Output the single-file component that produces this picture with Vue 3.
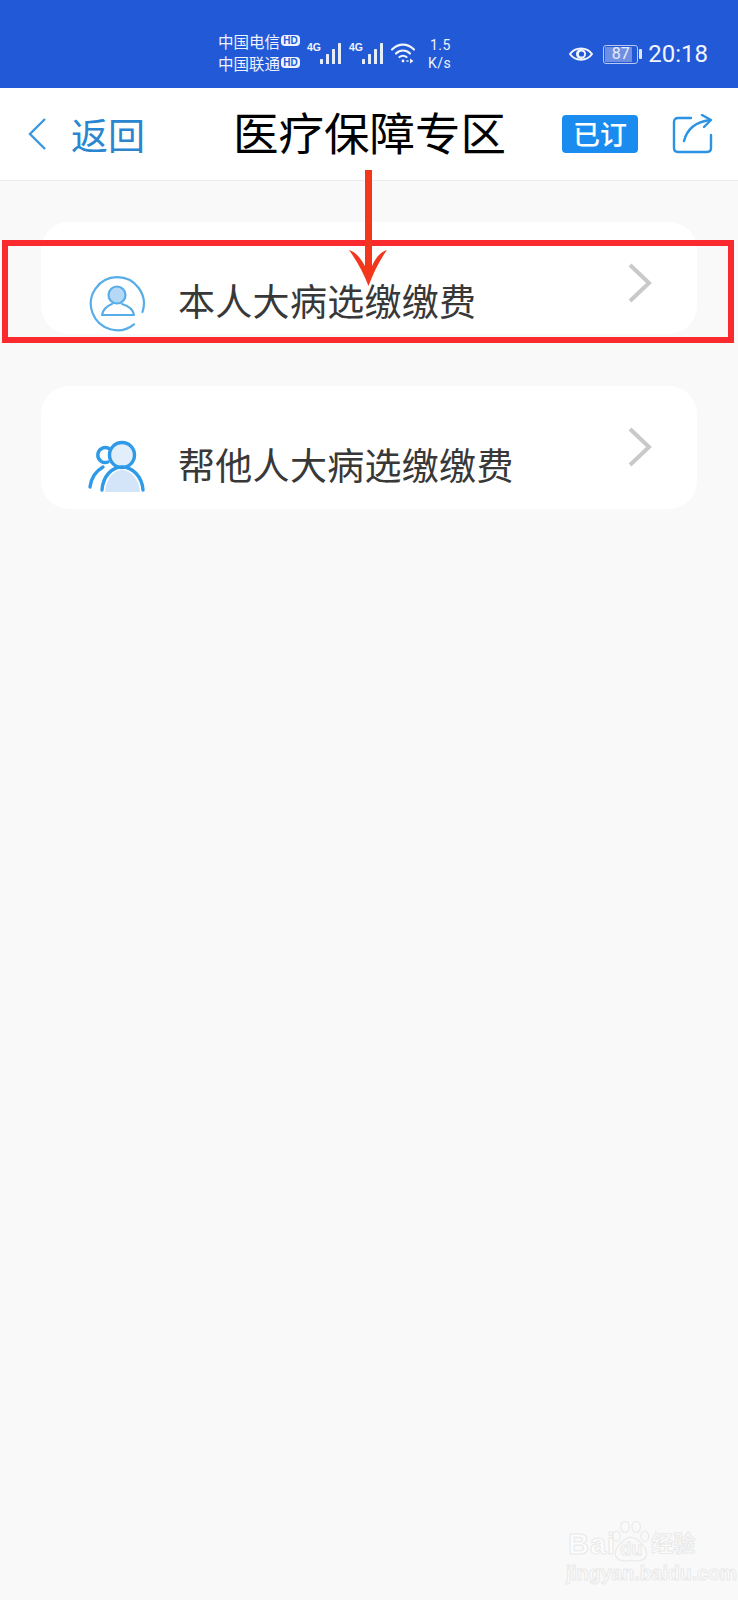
<script setup>
const rows = [
  { label: '本人大病选缴缴费', kind: 'self', height: 112 },
  { label: '帮他人大病选缴缴费', kind: 'other', height: 123 }
]
const bars = [5, 10, 15, 21]
</script>

<template>
  <div class="page">
    <div class="status">
      <div class="carriers">
        <div class="carrier"><span>中国电信</span><i class="hd">HD</i></div>
        <div class="carrier"><span>中国联通</span><i class="hd">HD</i></div>
      </div>
      <div v-for="n in 2" :key="n" class="net">
        <span class="g4">4G</span>
        <svg width="24" height="22" viewBox="0 0 24 22">
          <rect v-for="(b, i) in bars" :key="i" :x="1 + i * 6" :y="22 - b" width="3" :height="b" rx=".5" fill="#e6edfb" />
        </svg>
      </div>
      <svg class="wifi" width="26" height="22" viewBox="0 0 26 22" fill="none" stroke="#eef3fd" stroke-width="2.2" stroke-linecap="round">
        <path d="M2 7.500C8.500 1 17.500 1 24 7.500" />
        <path d="M6 11.500C10 7.500 16 7.500 20 11.500" />
        <path d="M9.500 15C11.500 13.300 14.500 13.300 16.500 15" />
        <circle cx="13" cy="19" r="1.400" fill="#eef3fd" stroke="none" />
        <path d="M17 19h1" stroke-width="1.500" />
        <path d="M20 16.500l3.500 2.500-3.500 2.500z" fill="#eef3fd" stroke="none" />
      </svg>
      <div class="speed"><span>1.5</span><span>K/s</span></div>
      <div class="status-right">
        <svg width="24" height="18" viewBox="0 0 24 18" fill="none">
          <path d="M1 9C6 1.500 18 1.500 23 9C18 16.500 6 16.500 1 9Z" stroke="#f2f5fd" stroke-width="2" />
          <circle cx="12" cy="9" r="5" fill="#f2f5fd" />
          <circle cx="12.500" cy="9" r="2.600" fill="#2259d6" />
        </svg>
        <div class="battery">
          <div class="cell">
            <div class="level"></div>
            <span>87</span>
          </div>
          <div class="tip"></div>
        </div>
        <span class="time">20:18</span>
      </div>
    </div>

    <header class="nav">
      <svg class="back" width="20" height="34" viewBox="0 0 20 34" fill="none">
        <path d="M17 2L2 17L17 32" stroke="#3a97e0" stroke-width="2.400" />
      </svg>
      <span class="back-text">返回</span>
      <h1 class="title">医疗保障专区</h1>
      <span class="badge">已订</span>
      <svg class="share" width="42" height="40" viewBox="0 0 42 40" fill="none" stroke="#2b93e6" stroke-width="2.400" stroke-linecap="round" stroke-linejoin="round">
        <path d="M19 4H6C3.500 4 2 5.500 2 8V34C2 36.500 3.500 38 6 38H35C37.500 38 39 36.500 39 34V21" />
        <path d="M12 27C15 15 23 8 38 6" />
        <path d="M30 1L39 6L32 13" />
      </svg>
    </header>

    <main class="list">
      <section v-for="row in rows" :key="row.label" class="card" :style="{ height: row.height + 'px' }">
        <svg v-if="row.kind === 'self'" class="icon" width="58" height="58" viewBox="0 0 58 58" fill="none" stroke="#58ade8" stroke-width="2.200">
          <path d="M54.500 38A26.500 26.500 0 1 0 46 50.300" stroke-linecap="round" />
          <circle cx="29" cy="21" r="8.500" fill="#b5d8f6" />
          <path d="M24 30C19 32 15 35 14 41H46C45 35 41 32 34 30" stroke-linecap="round" stroke-linejoin="round" />
        </svg>
        <svg v-else class="icon" width="58" height="58" viewBox="0 0 58 58" fill="none" stroke="#2f9be8" stroke-width="3.400" stroke-linecap="round">
          <path d="M17 54C18 40 26 32 34 32C42 32 51 40 52 54Z" fill="#d4e5fa" stroke="none" />
          <circle cx="34" cy="17" r="12.500" fill="#e3eefb" />
          <path d="M14 52C15 38 24 29 34 29C44 29 54 38 55 52" />
          <path d="M21 10.500A7.500 7.500 0 1 0 20 24" />
          <path d="M2 49C3 40 8 33 15 29" />
        </svg>
        <span class="label">{{ row.label }}</span>
        <svg class="chevron" width="24" height="40" viewBox="0 0 24 40" fill="none">
          <path d="M2 2L21 20L2 38" stroke="#c9c9c9" stroke-width="4" />
        </svg>
      </section>
    </main>

    <div class="highlight"></div>
    <svg class="arrow" width="40" height="120" viewBox="0 0 40 120">
      <path d="M17 0H24V88L24 96C27 89 32 82 39 80C31 91 25 104 20.500 116C16 104 9 91 1 80C8 82 13 89 17 96Z" fill="#f3371c" />
    </svg>

    <div class="watermark">
      <div class="wm-row">
        <span class="wm-latin">Bai</span>
        <span class="wm-paw">
          <svg width="40" height="43" viewBox="0 0 46 50" fill="none" stroke="#e9e9e9" stroke-width="1.300">
            <ellipse cx="16" cy="8" rx="5" ry="6.500" />
            <ellipse cx="29" cy="8" rx="5" ry="6.500" />
            <ellipse cx="6" cy="19" rx="4.500" ry="6" />
            <ellipse cx="39" cy="19" rx="4.500" ry="6" />
            <path d="M23 20C31 20 43 34 41 41C39 49 29 48 23 47C17 48 7 49 5 41C3 34 15 20 23 20Z" />
          </svg>
          <span class="wm-du">du</span>
        </span>
        <span class="wm-cn">经验</span>
      </div>
      <div class="wm-url">jingyan.baidu.com</div>
    </div>
  </div>
</template>

<style scoped>
.page {
  position: relative;
  width: 738px;
  height: 1600px;
  overflow: hidden;
  background: #f9f9f9;
  font-family: "Noto Sans CJK SC", "Noto Sans", sans-serif;
}
.status {
  height: 88px;
  box-sizing: border-box;
  padding: 20px 30px 0 218px;
  display: flex;
  align-items: center;
  background: #2259d6;
  color: #eef3fd;
}
.carriers {
  display: flex;
  flex-direction: column;
  gap: 2px;
  margin-top: -5px;
  margin-right: 7px;
}
.carrier {
  display: flex;
  align-items: center;
  gap: 1px;
  height: 20px;
  font-size: 15.500px;
  line-height: 20px;
  white-space: nowrap;
}
.hd {
  width: 19px;
  height: 11px;
  border-radius: 4px;
  background: #eef3fd;
  color: #2259d6;
  font: 700 10px/11px "Liberation Sans", sans-serif;
  text-align: center;
}
.net {
  position: relative;
  width: 42px;
  height: 22px;
  display: flex;
  justify-content: flex-end;
  padding-right: 6px;
  margin-top: -3px;
  box-sizing: border-box;
}
.g4 {
  position: absolute;
  left: 0;
  top: 0;
  font: 700 10.500px/11px "Liberation Sans", sans-serif;
}
.wifi {
  margin-top: -3px;
  margin-left: -1px;
}
.speed {
  display: flex;
  flex-direction: column;
  margin-left: 12px;
  margin-top: -1px;
  align-items: flex-start;
  font: 14px/18px Roboto, sans-serif;
  letter-spacing: .4px;
}
.speed span:first-child {
  margin-left: 2px;
}
.status-right {
  margin-left: auto;
  display: flex;
  align-items: center;
}
.battery {
  display: flex;
  align-items: center;
  margin-left: 10px;
  margin-right: 6px;
}
.cell {
  position: relative;
  width: 35px;
  height: 19px;
  box-sizing: border-box;
  border: 1.500px solid #b9c9f0;
  border-radius: 3px;
  font: 16px/16px Roboto, sans-serif;
  color: #e6ecfb;
  text-align: center;
}
.level {
  position: absolute;
  left: 1px;
  top: 1px;
  bottom: 1px;
  width: 27px;
  background: #6f8fe2;
}
.cell span {
  position: relative;
}
.tip {
  width: 3px;
  height: 10px;
  margin-left: 1px;
  background: #dfe7fa;
  border-radius: 1px;
}
.time {
  font: 24px/28px Roboto, sans-serif;
  color: #f2f5fd;
}
.nav {
  height: 93px;
  box-sizing: border-box;
  padding: 0 0 0 28px;
  display: flex;
  align-items: center;
  background: #fff;
  border-bottom: 1px solid #ececec;
}
.back {
  flex: none;
}
.back-text {
  flex: none;
  margin-left: 23px;
  font-size: 37px;
  line-height: 48px;
  color: #2a86d0;
  white-space: nowrap;
}
.title {
  flex: none;
  margin: -6px 0 0 88px;
  font-size: 45.500px;
  line-height: 60px;
  font-weight: 400;
  color: #000;
  white-space: nowrap;
}
.badge {
  flex: none;
  margin-left: 56px;
  width: 76px;
  height: 38px;
  border-radius: 4px;
  background: #1a8cf0;
  color: #fff;
  font-size: 27px;
  font-weight: 500;
  line-height: 38px;
  text-align: center;
}
.share {
  margin-left: 34px;
  flex: none;
}
.list {
  padding: 41px 41px 0;
  display: flex;
  flex-direction: column;
  gap: 52px;
}
.card {
  position: relative;
  display: flex;
  align-items: flex-start;
  padding: 0 45px 0 47px;
  background: #fff;
  border-radius: 28px;
}
.icon {
  margin-top: 52px;
  flex: none;
}
.label {
  margin-left: 32px;
  margin-top: 54px;
  font-size: 37px;
  letter-spacing: .3px;
  line-height: 48px;
  color: #383838;
  white-space: nowrap;
}
.chevron {
  margin-left: auto;
  margin-top: 41px;
  flex: none;
}
.highlight {
  position: absolute;
  left: 2px;
  top: 240px;
  width: 732px;
  height: 103px;
  box-sizing: border-box;
  border: 6.500px solid #fb2a2e;
}
.arrow {
  position: absolute;
  left: 348px;
  top: 170px;
}
.watermark {
  position: absolute;
  left: 566px;
  top: 1520px;
  display: flex;
  flex-direction: column;
  color: #fcfcfc;
  -webkit-text-stroke: 1px #e9e9e9;
  font-family: "Liberation Sans", "Noto Sans CJK SC", sans-serif;
}
.wm-row {
  height: 43px;
  display: flex;
  align-items: flex-end;
}
.wm-latin {
  margin-left: 2px;
  font-size: 29px;
  font-weight: 700;
  line-height: 38px;
  letter-spacing: 1px;
}
.wm-paw {
  position: relative;
  width: 40px;
  height: 43px;
  margin-left: -5px;
}
.wm-du {
  position: absolute;
  left: 9px;
  bottom: 4px;
  font-size: 18px;
  font-weight: 700;
  line-height: 20px;
}
.wm-cn {
  font-size: 22px;
  font-weight: 700;
  line-height: 38px;
}
.wm-url {
  margin-top: -1px;
  font-size: 19.500px;
  font-weight: 700;
  line-height: 22px;
  white-space: nowrap;
}
</style>
